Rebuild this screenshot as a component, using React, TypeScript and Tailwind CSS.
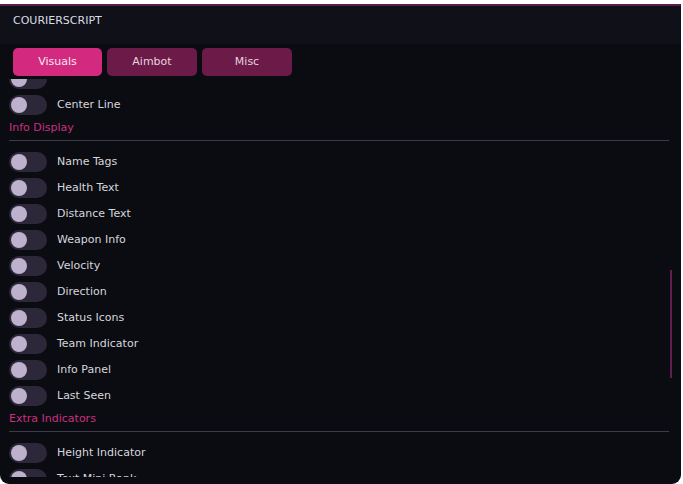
import React from "react";

type Section = { title?: string; items: string[] };

const sections: Section[] = [
  { items: ["", "Center Line"] },
  {
    title: "Info Display",
    items: [
      "Name Tags",
      "Health Text",
      "Distance Text",
      "Weapon Info",
      "Velocity",
      "Direction",
      "Status Icons",
      "Team Indicator",
      "Info Panel",
      "Last Seen",
    ],
  },
  { title: "Extra Indicators", items: ["Height Indicator", "Text Mini Rank"] },
];

function Toggle() {
  return (
    <div className="w-[38px] h-[20px] rounded-full bg-[#2c2839] flex items-center pl-[2px]">
      <div className="w-[16px] h-[16px] rounded-full bg-[#bdb1cd]" />
    </div>
  );
}

function Row({ label }: { label: string }) {
  return (
    <div className="h-[26px] flex items-center pl-[9px] gap-[10px]">
      <Toggle />
      {label && <span className="text-[11px] text-[#d6d6dc]">{label}</span>}
    </div>
  );
}

export default function App() {
  const tabs = ["Visuals", "Aimbot", "Misc"];
  return (
    <div className="w-[683px] h-[484px] bg-white pt-[4px] font-['DejaVu_Sans',sans-serif]">
      <div className="w-[681px] h-[480px] bg-[#0b0c12] border-t-2 border-[#5b1e4c] rounded-b-[9px] overflow-hidden flex flex-col">
        <div className="h-[38px] shrink-0 bg-[#0f1018] flex items-start pt-[8px] pl-[13px]">
          <span className="text-[11px] leading-[14px] text-[#dcdce2]">COURIERSCRIPT</span>
        </div>
        <div className="flex gap-[5px] px-[13px] pt-[4px] shrink-0">
          {tabs.map((t, i) => (
            <div
              key={t}
              className={
                i === 0
                  ? "w-[89px] h-[28px] rounded-[5px] bg-[#d3297f] flex items-center justify-center text-[11px] text-[#f6e9f1]"
                  : "w-[90px] h-[28px] rounded-[5px] bg-[#6c1a48] flex items-center justify-center text-[11px] text-[#e6d3df]"
              }
            >
              {t}
            </div>
          ))}
        </div>
        <div className="relative mt-[3px] h-[398px] shrink-0 overflow-hidden">
          <div className="-mt-[13px] flex flex-col">
            {sections.map((s, si) => (
              <div key={si} className="flex flex-col">
                {s.title && (
                  <div className="flex flex-col">
                    <div className="pl-[9px] mt-[3px] h-[14px] leading-[14px] text-[11px] text-[#c92f80]">
                      {s.title}
                    </div>
                    <div className="mx-[9px] mt-[5px] mb-[8px] h-px bg-[#3b3b4a] w-[660px]" />
                  </div>
                )}
                {s.items.map((it, ii) => (
                  <Row key={si + "-" + ii} label={it} />
                ))}
              </div>
            ))}
          </div>
          <div className="absolute left-[670px] top-[191px] w-[2px] h-[108px] bg-[#5e1f4e]" />
        </div>
      </div>
    </div>
  );
}
